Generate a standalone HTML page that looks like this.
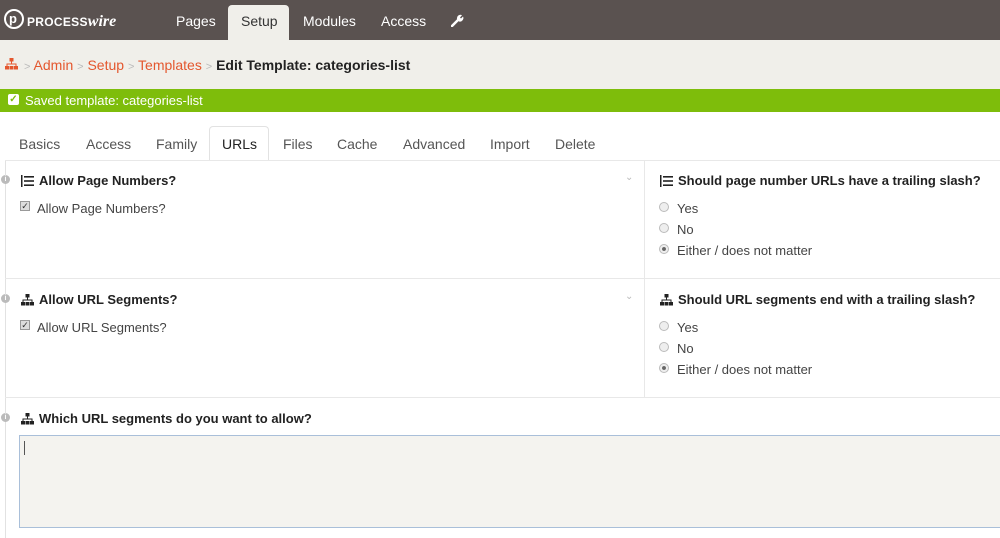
<!DOCTYPE html>
<html><head><style>
*{margin:0;padding:0;box-sizing:border-box}
body{width:1000px;height:538px;overflow:hidden;background:#fff;font-family:"Liberation Sans",sans-serif;position:relative;color:#333}
.a{position:absolute;white-space:nowrap}
.nav{left:0;top:0;width:1000px;height:40px;background:#5a5250}
.bc{left:0;top:40px;width:1000px;height:49px;background:#f0efea}
.green{left:0;top:89px;width:1000px;height:23px;background:#7ebd0b;color:#fff;font-size:13px}
.tab{font-size:14px;color:#555;top:136px}
.h{font-size:13px;font-weight:bold;color:#222}
.l{font-size:13px;color:#444}
.radio{width:10px;height:10px;border-radius:50%;border:1px solid #bbb;background:#eee}
.cb{width:10px;height:10px;border:1px solid #999;background:#ddd;font-size:9px;line-height:8px;text-align:center;color:#333}
.info{width:9px;height:9px;border-radius:50%;background:#bbb;color:#fff;font-size:7px;line-height:9px;text-align:center;font-weight:bold}
</style></head><body>
<svg width="0" height="0" style="position:absolute"><defs>
<symbol id="sm" viewBox="0 0 13 12"><rect x="4.5" y="0" width="4" height="3.5"/><rect x="6" y="3" width="1" height="3"/><rect x="1.5" y="5.5" width="10" height="1"/><rect x="1.5" y="5.5" width="1" height="3"/><rect x="10.5" y="5.5" width="1" height="3"/><rect x="0" y="8" width="4" height="3.5"/><rect x="4.5" y="8" width="4" height="3.5"/><rect x="9" y="8" width="4" height="3.5"/></symbol>
<symbol id="ls" viewBox="0 0 13 12"><rect x="0" y="0" width="1.5" height="12"/><rect x="3" y="1" width="10" height="1.6"/><rect x="3" y="5.2" width="10" height="1.6"/><rect x="3" y="9.4" width="10" height="1.6"/></symbol>
</defs></svg>
<div class="a nav"></div>
<div class="a" style="left:4px;top:9px;width:20px;height:20px;border:2px solid #fff;border-radius:50%"></div>
<div class="a" style="left:9px;top:11px;color:#fff;font-weight:bold;font-size:13px">p</div>
<div class="a" style="left:27px;top:13px;color:#fff;font-weight:bold;font-size:12px;letter-spacing:.3px">PROCESS<i style="font-family:'Liberation Serif';font-size:16px;letter-spacing:0">wire</i></div>
<div class="a" style="left:176px;color:#fff;font-size:14px;top:13px">Pages</div>
<div class="a" style="left:228px;top:5px;width:61px;height:35px;background:#f0efea;border-radius:4px 4px 0 0"></div>
<div class="a" style="left:241px;top:13px;font-size:14px;color:#333">Setup</div>
<div class="a" style="left:303px;top:13px;font-size:14px;color:#fff">Modules</div>
<div class="a" style="left:381px;top:13px;font-size:14px;color:#fff">Access</div>
<svg class="a" style="left:451px;top:14px" width="13" height="13" viewBox="0 0 13 13"><path d="M1 12 L7 6" stroke="#fff" stroke-width="2.5" stroke-linecap="round"/><path d="M6 5 A3.5 3.5 0 0 1 11 1.2 L9 3.5 L10 4.5 L12 2.5 A3.5 3.5 0 0 1 8 7.5 Z" fill="#fff"/></svg>
<div class="a bc"></div>
<svg class="a" style="left:5px;top:58px;fill:#e4572e" width="13" height="12"><use href="#sm"/></svg>
<div class="a" style="left:24px;top:57px;font-size:14px;color:#e4572e"><span style="color:#bbb;font-size:11px">&gt;</span> Admin <span style="color:#bbb;font-size:11px">&gt;</span> Setup <span style="color:#bbb;font-size:11px">&gt;</span> Templates <span style="color:#bbb;font-size:11px">&gt;</span> <b style="color:#222">Edit Template: categories-list</b></div>
<div class="a green"><span class="a" style="left:8px;top:5px;width:11px;height:11px;background:#fff;border-radius:2px;color:#7ebd0b;font-size:10px;line-height:11px;text-align:center;font-weight:bold">✓</span><span class="a" style="left:25px;top:4px">Saved template: categories-list</span></div>
<div class="a tab" style="left:19px">Basics</div>
<div class="a tab" style="left:86px">Access</div>
<div class="a tab" style="left:156px">Family</div>
<div class="a" style="left:209px;top:126px;width:60px;height:35px;background:#fff;border:1px solid #e2e2e2;border-bottom:none;border-radius:4px 4px 0 0"></div>
<div class="a tab" style="left:222px;color:#222">URLs</div>
<div class="a tab" style="left:283px">Files</div>
<div class="a tab" style="left:337px">Cache</div>
<div class="a tab" style="left:403px">Advanced</div>
<div class="a tab" style="left:490px">Import</div>
<div class="a tab" style="left:555px">Delete</div>
<div class="a" style="left:5px;top:160px;width:1px;height:378px;background:#e2e2e2"></div>
<div class="a" style="left:5px;top:160px;width:995px;height:1px;background:#e8e8e8"></div>
<div class="a" style="left:5px;top:278px;width:995px;height:1px;background:#e8e8e8"></div>
<div class="a" style="left:5px;top:397px;width:995px;height:1px;background:#e8e8e8"></div>
<div class="a" style="left:644px;top:160px;width:1px;height:237px;background:#e8e8e8"></div>
<!-- row1 -->
<div class="a info" style="left:1px;top:175px">i</div>
<svg class="a" style="left:21px;top:175px;fill:#222" width="13" height="12"><use href="#ls"/></svg>
<div class="a h" style="left:39px;top:173px">Allow Page Numbers?</div>
<div class="a" style="left:625px;top:172px;color:#bbb;font-size:10px">⌄</div>
<div class="a cb" style="left:20px;top:201px">✓</div>
<div class="a l" style="left:37px;top:201px">Allow Page Numbers?</div>
<svg class="a" style="left:660px;top:175px;fill:#222" width="13" height="12"><use href="#ls"/></svg>
<div class="a h" style="left:678px;top:173px">Should page number URLs have a trailing slash?</div>
<div class="a radio" style="left:659px;top:202px"></div><div class="a l" style="left:677px;top:201px">Yes</div>
<div class="a radio" style="left:659px;top:223px"></div><div class="a l" style="left:677px;top:222px">No</div>
<div class="a radio" style="left:659px;top:244px;background:radial-gradient(#666 30%,#eee 40%)"></div><div class="a l" style="left:677px;top:243px">Either / does not matter</div>
<!-- row2 -->
<div class="a info" style="left:1px;top:294px">i</div>
<svg class="a" style="left:21px;top:294px;fill:#222" width="13" height="12"><use href="#sm"/></svg>
<div class="a h" style="left:39px;top:292px">Allow URL Segments?</div>
<div class="a" style="left:625px;top:291px;color:#bbb;font-size:10px">⌄</div>
<div class="a cb" style="left:20px;top:320px">✓</div>
<div class="a l" style="left:37px;top:320px">Allow URL Segments?</div>
<svg class="a" style="left:660px;top:294px;fill:#222" width="13" height="12"><use href="#sm"/></svg>
<div class="a h" style="left:678px;top:292px">Should URL segments end with a trailing slash?</div>
<div class="a radio" style="left:659px;top:321px"></div><div class="a l" style="left:677px;top:320px">Yes</div>
<div class="a radio" style="left:659px;top:342px"></div><div class="a l" style="left:677px;top:341px">No</div>
<div class="a radio" style="left:659px;top:363px;background:radial-gradient(#666 30%,#eee 40%)"></div><div class="a l" style="left:677px;top:362px">Either / does not matter</div>
<!-- row3 -->
<div class="a info" style="left:1px;top:413px">i</div>
<svg class="a" style="left:21px;top:413px;fill:#222" width="13" height="12"><use href="#sm"/></svg>
<div class="a h" style="left:39px;top:411px">Which URL segments do you want to allow?</div>
<div class="a" style="left:19px;top:435px;width:990px;height:93px;background:#f4f3ef;border:1px solid #a9bfd9"></div>
<div class="a" style="left:24px;top:441px;width:1px;height:14px;background:#555"></div>
</body></html>
